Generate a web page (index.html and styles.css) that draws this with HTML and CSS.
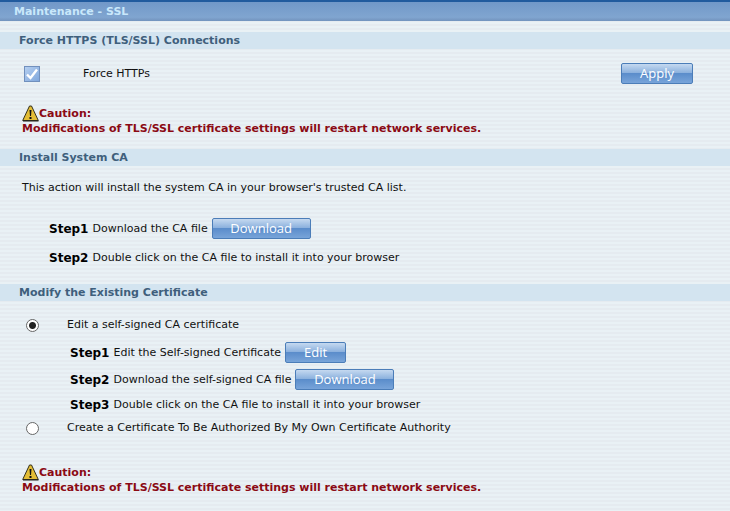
FILE: index.html
```html
<!DOCTYPE html>
<html lang="en">
<head>
    <meta charset="UTF-8">
    <meta name="viewport" content="width=device-width, initial-scale=1.0">
    <title>Maintenance - SSL</title>
    <link rel="stylesheet" href="styles.css">
</head>
<body>

    <h1>Maintenance - SSL</h1>

    <form>
        <section class="force">
            <h2>Force HTTPS (TLS/SSL) Connections</h2>
            <div class="force-row">
                <input type="checkbox" id="forceHttps" checked>
                <label for="forceHttps">Force HTTPs</label>
                <button type="submit">Apply</button>
            </div>
            <div class="caution">
                <div class="caution-title">
                    <svg width="17" height="17" viewBox="0 0 17 17" aria-hidden="true">
                        <path d="M7.5 1 H9.5 L16.3 15.5 H0.7 Z" fill="#e3bd35" stroke="#33301c" stroke-width="1" stroke-linejoin="round"/>
                        <path d="M1 16 H16.5" stroke="#23231c" stroke-width="1"/>
                        <path d="M7.5 5 H9.5 L9 11 H8 Z" fill="#111"/>
                        <path d="M8.5 12 V14" stroke="#111" stroke-width="2"/>
                    </svg>Caution:
                </div>
                <p>Modifications of TLS/SSL certificate settings will restart network services.</p>
            </div>
        </section>

        <section class="install">
            <h2>Install System CA</h2>
            <p class="intro">This action will install the system CA in your browser's trusted CA list.</p>
            <div class="step"><b>Step1</b> Download the CA file <button type="button">Download</button></div>
            <div class="step"><b>Step2</b> Double click on the CA file to install it into your browser</div>
        </section>

        <section class="modify">
            <h2>Modify the Existing Certificate</h2>
            <div class="option">
                <input type="radio" name="cert" id="selfSigned" checked>
                <label for="selfSigned">Edit a self-signed CA certificate</label>
            </div>
            <div class="substeps">
                <div class="step"><b>Step1</b> Edit the Self-signed Certificate <button type="button" class="short">Edit</button></div>
                <div class="step"><b>Step2</b> Download the self-signed CA file <button type="button">Download</button></div>
                <div class="step plain"><b>Step3</b> Double click on the CA file to install it into your browser</div>
            </div>
            <div class="option">
                <input type="radio" name="cert" id="ownAuthority">
                <label for="ownAuthority">Create a Certificate To Be Authorized By My Own Certificate Authority</label>
            </div>
            <div class="caution">
                <div class="caution-title">
                    <svg width="17" height="17" viewBox="0 0 17 17" aria-hidden="true">
                        <path d="M7.5 1 H9.5 L16.3 15.5 H0.7 Z" fill="#e3bd35" stroke="#33301c" stroke-width="1" stroke-linejoin="round"/>
                        <path d="M1 16 H16.5" stroke="#23231c" stroke-width="1"/>
                        <path d="M7.5 5 H9.5 L9 11 H8 Z" fill="#111"/>
                        <path d="M8.5 12 V14" stroke="#111" stroke-width="2"/>
                    </svg>Caution:
                </div>
                <p>Modifications of TLS/SSL certificate settings will restart network services.</p>
            </div>
        </section>
    </form>

</body>
</html>
```

FILE: styles.css
```css
body {
    margin: 0;
    font-family: Verdana, "DejaVu Sans", sans-serif;
    font-size: 11px;
    line-height: 14px;
    color: #111;
    background: repeating-linear-gradient(#e5ebf0 0, #e5ebf0 2px, #e9f1f5 2px, #e9f1f5 4px);
}
h1 {
    margin: 0 0 11px;
    padding: 0 14px;
    border-top: 2px solid #215b9e;
    font-size: 11px;
    line-height: 19px;
    color: #c9e8fb;
    background: linear-gradient(#7198c8, #80a5d0 80%, #7293bd);
}
h2 {
    margin: 0;
    padding: 0 19px;
    font-size: 11px;
    line-height: 17px;
    color: #3f5f7c;
    background-color: #d3e4f0;
}
p {
    margin: 0;
}
input {
    margin: 0;
}
button {
    width: 99px;
    height: 21px;
    padding: 0;
    border: 1px solid #4b7db8;
    border-radius: 2px;
    font-family: "Open Sans", sans-serif;
    font-size: 13px;
    line-height: 19px;
    color: #fff;
    background: linear-gradient(#c5d9f0, #8db2de 45%, #5b8dcb 50%, #78a4d9);
    cursor: pointer;
}
.short {
    width: 61px;
}
.force-row {
    display: flex;
    align-items: center;
    padding: 14px 37px 0 24px;
}
.force-row label {
    margin-left: 43px;
}
.force-row button {
    width: 72px;
    margin-left: auto;
}
input[type="checkbox"] {
    appearance: none;
    width: 16px;
    height: 16px;
    border: 1px solid #7190bd;
    background: url("data:image/svg+xml,%3Csvg xmlns='http://www.w3.org/2000/svg' viewBox='0 0 14 14'%3E%3Cpath d='M2 7.5 L5.5 11 L12 2.5' fill='none' stroke='white' stroke-width='2.4'/%3E%3C/svg%3E"), linear-gradient(135deg, #b5cff0, #80a7dc);
}
input[type="radio"] {
    appearance: none;
    width: 13px;
    height: 13px;
    border: 1px solid #666;
    border-radius: 50%;
    background: #fff;
}
input[type="radio"]:checked {
    background: radial-gradient(circle, #222 3px, #fff 4px);
}
.caution {
    padding: 21px 22px 13px;
    font-weight: bold;
    color: #8b0a14;
}
.caution-title {
    display: flex;
    align-items: center;
    height: 17px;
}
.intro {
    padding: 15px 22px 19px;
}
.step {
    display: flex;
    align-items: center;
    gap: 4px;
    height: 27px;
}
.step b {
    font-size: 12px;
    color: #000;
}
.install .step {
    height: 29px;
    padding-left: 49px;
}
.install {
    padding-bottom: 12px;
}
.option {
    display: flex;
    align-items: center;
    gap: 28px;
    height: 24px;
    padding-left: 26px;
}
.modify h2 {
    margin-bottom: 12px;
}
.substeps {
    padding: 2px 0 0 70px;
}
.substeps .plain {
    height: 23px;
}
.modify .caution {
    padding-top: 24px;
}
```
